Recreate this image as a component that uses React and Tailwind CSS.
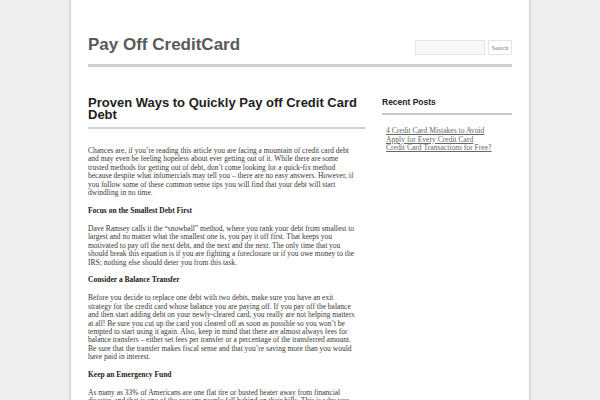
import React from "react";

const posts = [
  "4 Credit Card Mistakes to Avoid",
  "Apply for Every Credit Card",
  "Credit Card Transactions for Free?",
];

// lines kept as in the original layout so the wrapping matches
const article = [
  {
    type: "p",
    lines: [
      "Chances are, if you’re reading this article you are facing a mountain of credit card debt",
      "and may even be feeling hopeless about ever getting out of it. While there are some",
      "trusted methods for getting out of debt, don’t come looking for a quick-fix method",
      "because despite what infomercials may tell you – there are no easy answers. However, if",
      "you follow some of these common sense tips you will find that your debt will start",
      "dwindling in no time.",
    ],
  },
  { type: "h", text: "Focus on the Smallest Debt First" },
  {
    type: "p",
    lines: [
      "Dave Ramsey calls it the “snowball” method, where you rank your debt from smallest to",
      "largest and no matter what the smallest one is, you pay it off first. That keeps you",
      "motivated to pay off the next debt, and the next and the next. The only time that you",
      "should break this equation is if you are fighting a foreclosure or if you owe money to the",
      "IRS; nothing else should deter you from this task.",
    ],
  },
  { type: "h", text: "Consider a Balance Transfer" },
  {
    type: "p",
    lines: [
      "Before you decide to replace one debt with two debts, make sure you have an exit",
      "strategy for the credit card whose balance you are paying off. If you pay off the balance",
      "and then start adding debt on your newly-cleared card, you really are not helping matters",
      "at all! Be sure you cut up the card you cleared off as soon as possible so you won’t be",
      "tempted to start using it again. Also, keep in mind that there are almost always fees for",
      "balance transfers – either set fees per transfer or a percentage of the transferred amount.",
      "Be sure that the transfer makes fiscal sense and that you’re saving more than you would",
      "have paid in interest.",
    ],
  },
  { type: "h", text: "Keep an Emergency Fund" },
  {
    type: "p",
    lines: [
      "As many as 33% of Americans are one flat tire or busted heater away from financial",
      "disaster, and that is one of the reasons people fall behind on their bills. This is why you",
      "should set aside a small amount every month for the unexpected.",
    ],
  },
];

export default function App() {
  return (
    <div className="h-screen overflow-hidden bg-[#efefef]">
      <div className="mx-auto min-h-full w-[458px] bg-white px-[17px] pt-[35px] shadow-[0_0_3px_rgba(0,0,0,0.3)]">
        <header className="border-b-[3px] border-[#d0d0d0] pb-[9px]">
          <div className="flex items-center justify-between">
            <h1 className="font-['Liberation_Sans',Arial,sans-serif] text-[17px] font-bold leading-[20px] text-[#595959]">
              Pay Off CreditCard
            </h1>
            <div className="mt-[5px] flex items-center gap-[3px]">
              <input
                type="text"
                className="h-[15px] w-[70px] border border-[#e6e6e6] bg-[#f8f8f8] outline-none"
              />
              <button className="h-[15px] w-[24px] border border-[#e6e6e6] bg-white font-['Liberation_Serif',serif] text-[6px] leading-none text-[#777]">
                Search
              </button>
            </div>
          </div>
        </header>

        <div className="mt-[30px] flex gap-[17px]">
          <main className="w-[277px] shrink-0">
            <h2 className="border-b-2 border-[#cfcfcf] pb-[6px] font-['Liberation_Sans',Arial,sans-serif] text-[13px] font-bold leading-[12px] text-[#222]">
              Proven Ways to Quickly Pay off Credit Card Debt
            </h2>
            <div className="mt-[18px] flex flex-col gap-[9.4px] font-['Liberation_Serif',serif] text-[7.5px] leading-[8.43px] text-[#383838]">
              {article.map((block, i) =>
                block.type === "h" ? (
                  <h3 key={i} className="font-bold text-[#222]">
                    {block.text}
                  </h3>
                ) : (
                  <p key={i} className="whitespace-nowrap">
                    {block.lines.map((line, j) => (
                      <React.Fragment key={j}>
                        {line}
                        {j < block.lines.length - 1 && <br />}
                      </React.Fragment>
                    ))}
                  </p>
                )
              )}
            </div>
          </main>

          <aside className="w-[130px] shrink-0">
            <h2 className="border-b-2 border-[#c8c8c8] pb-[6px] font-['Liberation_Sans',Arial,sans-serif] text-[8.5px] font-bold leading-[10px] text-[#222]">
              Recent Posts
            </h2>
            <ul className="ml-[4px] mt-[12px] font-['Liberation_Serif',serif] text-[7.6px] leading-[8.5px] text-[#666]">
              {posts.map((p) => (
                <li key={p}>
                  <a href="#" className="underline">
                    {p}
                  </a>
                </li>
              ))}
            </ul>
          </aside>
        </div>
      </div>
    </div>
  );
}
